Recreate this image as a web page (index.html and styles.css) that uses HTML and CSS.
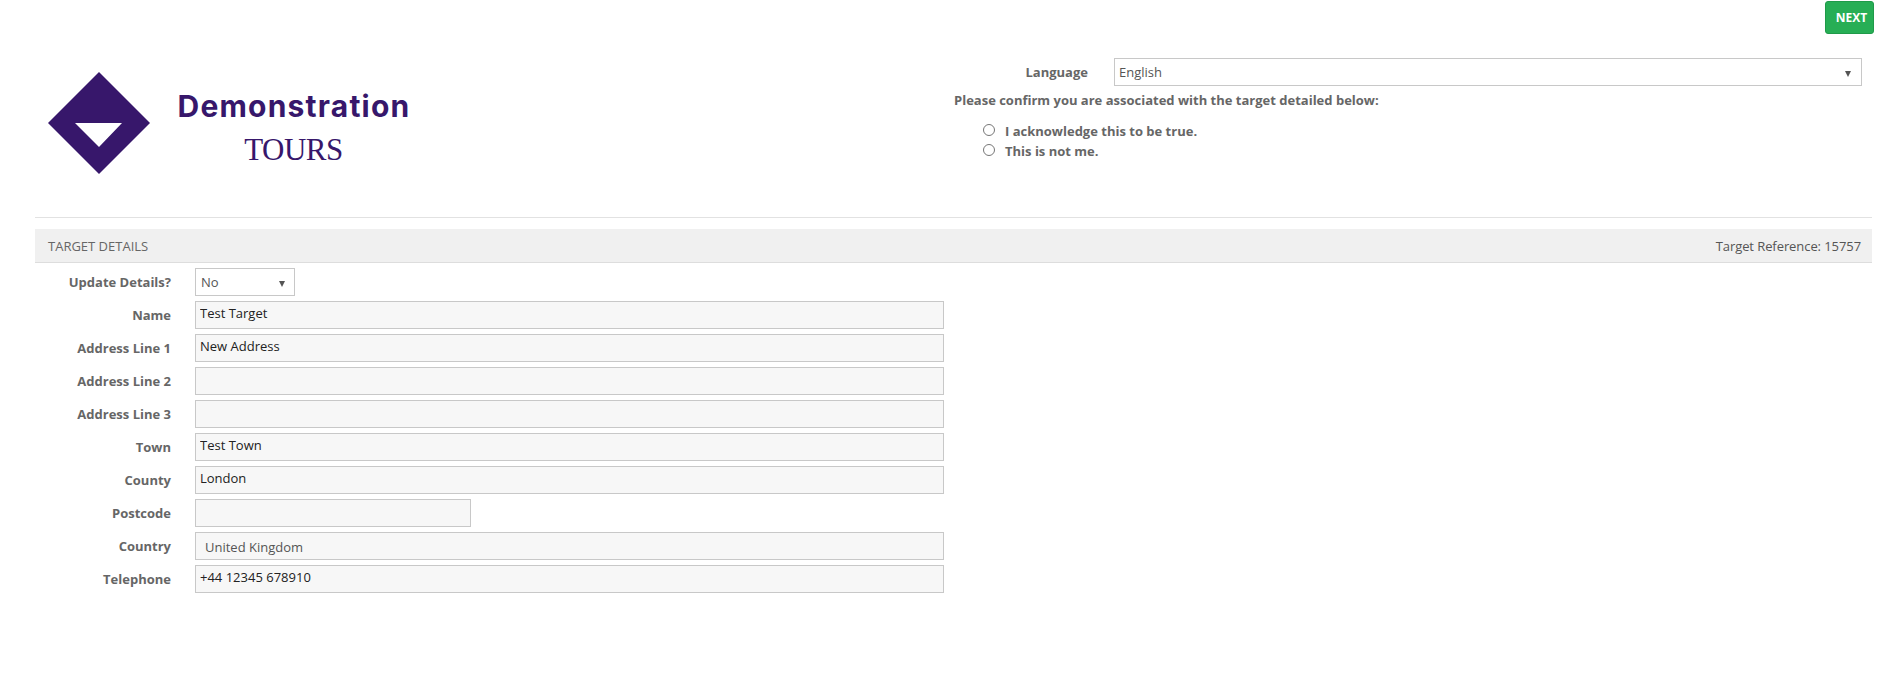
FILE: index.html
```html
<!DOCTYPE html>
<html lang="en">
<head>
    <meta charset="UTF-8">
    <meta name="viewport" content="width=device-width, initial-scale=1.0">
    <title>Target Details</title>
    <link rel="stylesheet" href="styles.css">
</head>
<body>
    <div class="top-bar">
        <button class="next-btn" type="button">NEXT</button>
    </div>

    <div class="intro">
        <div class="logo">
            <svg class="logo-mark" width="102" height="102" viewBox="0 0 102 102">
                <path d="M51 0 L102 51 L51 102 L0 51 Z M27 51 L51 75 L74 51 Z" fill="#37176b" fill-rule="evenodd"/>
            </svg>
            <div class="logo-text">
                <div class="logo-name">Demonstration</div>
                <div class="logo-sub">TOURS</div>
            </div>
        </div>
        <div class="confirm">
            <div class="language-row">
                <label class="language-label">Language</label>
                <div class="select-wrap language-select">
                    <select>
                        <option>English</option>
                    </select>
                </div>
            </div>
            <p class="confirm-title">Please confirm you are associated with the target detailed below:</p>
            <label class="radio-row"><input type="radio" name="confirm"> I acknowledge this to be true.</label>
            <label class="radio-row"><input type="radio" name="confirm"> This is not me.</label>
        </div>
    </div>

    <hr class="divider">

    <div class="section-head">
        <span>TARGET DETAILS</span>
        <span class="section-ref">Target Reference: 15757</span>
    </div>

    <form class="details">
        <div class="form-row">
            <label>Update Details?</label>
            <div class="select-wrap update-select">
                <select>
                    <option>No</option>
                    <option>Yes</option>
                </select>
            </div>
        </div>
        <div class="form-row">
            <label>Name</label>
            <input class="field" type="text" value="Test Target">
        </div>
        <div class="form-row">
            <label>Address Line 1</label>
            <input class="field" type="text" value="New Address">
        </div>
        <div class="form-row">
            <label>Address Line 2</label>
            <input class="field" type="text">
        </div>
        <div class="form-row">
            <label>Address Line 3</label>
            <input class="field" type="text">
        </div>
        <div class="form-row">
            <label>Town</label>
            <input class="field" type="text" value="Test Town">
        </div>
        <div class="form-row">
            <label>County</label>
            <input class="field" type="text" value="London">
        </div>
        <div class="form-row">
            <label>Postcode</label>
            <input class="field field-short" type="text">
        </div>
        <div class="form-row">
            <label>Country</label>
            <div class="field field-static">United Kingdom</div>
        </div>
        <div class="form-row">
            <label>Telephone</label>
            <input class="field" type="text" value="+44 12345 678910">
        </div>
    </form>
</body>
</html>
```

FILE: styles.css
```css
* {
    box-sizing: border-box;
}
body {
    font-family: 'Open Sans', sans-serif;
    font-size: 13px;
    color: #666;
    background: #fff;
    margin: 0;
    padding: 0;
}
.top-bar {
    display: flex;
    justify-content: flex-end;
    padding: 1px 29px 0 0;
}
.next-btn {
    width: 49px;
    height: 33px;
    padding: 0 0 0 4px;
    background: #27ae55;
    border: 1px solid #1f9a49;
    border-radius: 3px;
    color: #fff;
    font-family: inherit;
    font-size: 12px;
    font-weight: 700;
}
.intro {
    display: flex;
    height: 183px;
}
.logo {
    display: flex;
    width: 954px;
    padding: 38px 0 0 48px;
}
.logo-mark {
    flex: none;
}
.logo-text {
    width: 234px;
    margin-left: 27px;
    color: #37176b;
    text-align: center;
}
.logo-name {
    font-family: 'Inter', sans-serif;
    font-size: 30px;
    font-weight: 700;
    line-height: 38px;
    margin-top: 15px;
    letter-spacing: 1.2px;
    white-space: nowrap;
}
.logo-sub {
    font-family: 'Liberation Serif', serif;
    font-size: 31px;
    line-height: 34px;
    letter-spacing: -0.5px;
    margin-top: 8px;
    margin-right: 1px;
}
.confirm {
    flex: 1;
    padding-top: 24px;
    font-weight: 700;
}
.language-row {
    display: flex;
    align-items: center;
}
.language-label {
    width: 134px;
    text-align: right;
}
.select-wrap {
    position: relative;
    height: 28px;
    background: #fff;
    border: 1px solid #c8c8c8;
}
.select-wrap::after {
    content: "";
    position: absolute;
    right: 10px;
    top: 12px;
    border-left: 3px solid transparent;
    border-right: 3px solid transparent;
    border-top: 6px solid #555;
}
.select-wrap select {
    display: block;
    width: 100%;
    height: 100%;
    padding: 0 0 0 4px;
    border: 0;
    outline: none;
    background: transparent;
    appearance: none;
    font-family: inherit;
    font-size: 13px;
    color: #555;
}
.language-select {
    width: 748px;
    margin-left: 26px;
}
.confirm-title {
    margin: 5px 0 12px;
    line-height: 18px;
}
.radio-row {
    display: flex;
    align-items: center;
    height: 20px;
    padding-left: 29px;
}
.radio-row input {
    width: 12px;
    height: 12px;
    margin: -2px 10px 0 0;
    flex: none;
}
.divider {
    height: 1px;
    margin: 0 31px 11px 35px;
    border: 0;
    background: #e2e2e2;
}
.section-head {
    display: flex;
    justify-content: space-between;
    align-items: center;
    height: 34px;
    margin: 0 31px 0 35px;
    padding: 0 11px 0 13px;
    background: #f0f0f0;
    border-bottom: 1px solid #ddd;
    font-size: 13px;
}
.section-ref {
    color: #555;
    letter-spacing: -0.08px;
}
.details {
    display: flex;
    flex-direction: column;
    gap: 5px;
    padding-top: 5px;
}
.form-row {
    display: flex;
    align-items: center;
}
.form-row label {
    width: 171px;
    flex: none;
    text-align: right;
    font-size: 13px;
    font-weight: 700;
}
.update-select {
    width: 100px;
    margin-left: 24px;
}
.update-select select {
    padding-left: 5px;
}
.update-select::after {
    right: 9px;
}
.field {
    width: 749px;
    height: 28px;
    margin: 0 0 0 24px;
    padding: 0 4px 5px;
    background: #f7f7f7;
    border: 1px solid #c8c8c8;
    border-radius: 0;
    outline: none;
    font-family: inherit;
    font-size: 13px;
    color: #222;
}
.field-short {
    width: 276px;
}
.field-static {
    display: flex;
    align-items: center;
    padding: 1px 0 0 9px;
    color: #555;
}
```
